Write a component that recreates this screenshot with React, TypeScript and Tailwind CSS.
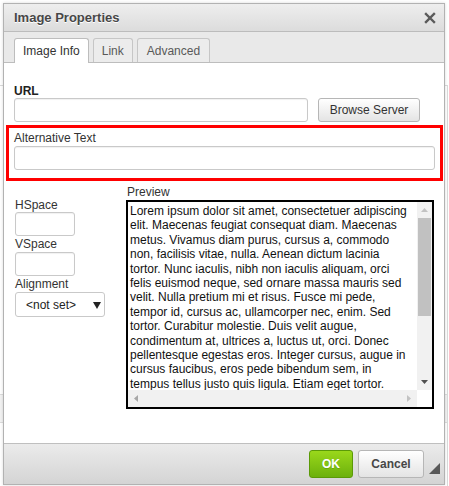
import React from "react";

const previewLines = [
  "Lorem ipsum dolor sit amet, consectetuer adipiscing",
  "elit. Maecenas feugiat consequat diam. Maecenas",
  "metus. Vivamus diam purus, cursus a, commodo",
  "non, facilisis vitae, nulla. Aenean dictum lacinia",
  "tortor. Nunc iaculis, nibh non iaculis aliquam, orci",
  "felis euismod neque, sed ornare massa mauris sed",
  "velit. Nulla pretium mi et risus. Fusce mi pede,",
  "tempor id, cursus ac, ullamcorper nec, enim. Sed",
  "tortor. Curabitur molestie. Duis velit augue,",
  "condimentum at, ultrices a, luctus ut, orci. Donec",
  "pellentesque egestas eros. Integer cursus, augue in",
  "cursus faucibus, eros pede bibendum sem, in",
  "tempus tellus justo quis ligula. Etiam eget tortor.",
  "Vestibulum rutrum, est ut placerat elementum, lectus",
];

const inputCls =
  "block h-[24px] rounded-[3px] border border-[#c9c9c9] bg-white shadow-[inset_0_1px_1px_rgba(0,0,0,0.06)]";

export default function App() {
  return (
    <div className="relative w-[449px] h-[486px] overflow-hidden bg-white font-['Liberation_Sans',Arial,sans-serif] text-[12px] leading-[14px] text-[#333]">
      {/* background page */}
      <div className="h-full pt-[85px]">
        <div className="h-full mr-[1px] border-t border-r border-[#dadada]">
          <div className="mt-[308px] h-[29px] border-y border-[#dcdcdc] bg-[#f2f2f2]" />
        </div>
      </div>

      {/* dialog */}
      <div className="absolute left-[3px] top-[3px] w-[442px] h-[482px] flex flex-col border border-[#b2b2b2] bg-white shadow-[0_0_3px_rgba(0,0,0,0.15)]">
        {/* title */}
        <div className="h-[28px] shrink-0 flex items-center justify-between pl-[10px] pr-[8px] border-b border-[#bcbcbc] bg-gradient-to-b from-[#eeeeee] to-[#dcdcdc]">
          <span className="text-[13px] font-bold text-[#474747] [text-shadow:0_1px_0_#fff]">
            Image Properties
          </span>
          <svg width="12" height="12" viewBox="0 0 12 12" className="mt-[1px]">
            <path d="M2 2 L10 10 M10 2 L2 10" stroke="#5a5a5a" strokeWidth="2.4" strokeLinecap="square" />
          </svg>
        </div>

        {/* tabs */}
        <div className="h-[31px] shrink-0 flex items-end gap-[4px] pl-[10px] border-b border-[#bdbdbd] bg-[#e9e9e9]">
          <div className="h-[25px] mb-[-1px] px-[8px] flex items-center rounded-t-[3px] border border-b-0 border-[#bdbdbd] bg-white text-[#333]">
            Image Info
          </div>
          <div className="h-[24px] px-[8px] flex items-center rounded-t-[3px] border border-b-0 border-[#c6c6c6] bg-[#ececec] text-[#595959]">
            Link
          </div>
          <div className="h-[24px] px-[9px] flex items-center rounded-t-[3px] border border-b-0 border-[#c6c6c6] bg-[#ececec] text-[#595959]">
            Advanced
          </div>
        </div>

        {/* body */}
        <div className="flex-1 flex flex-col">
          <div className="pt-[21px] pl-[10px]">
            <div className="font-bold text-[#222]">URL</div>
            <div className="flex items-center">
              <div className={inputCls + " w-[294px]"} />
              <div className="ml-[10px] w-[102px] h-[24px] flex items-center justify-center rounded-[3px] border border-[#b6b6b6] bg-gradient-to-b from-white to-[#e4e4e4] text-[#333]">
                Browse Server
              </div>
            </div>
          </div>

          <div className="mt-[3px] ml-[2px] w-[437px] h-[56px] border-[3px] border-[#ff0000] pt-[3px] pl-[5px] pb-[8px]">
            <div>Alternative Text</div>
            <div className={inputCls + " mt-[1px] w-[421px]"} />
          </div>

          <div className="flex">
            {/* left column */}
            <div className="pl-[11px] pt-[17px] w-[122px] shrink-0">
              <div>HSpace</div>
              <div className={inputCls + " w-[60px]"} />
              <div className="mt-[1px]">VSpace</div>
              <div className={inputCls + " w-[60px] mt-[1px]"} />
              <div className="mt-[1px]">Alignment</div>
              <div className="relative mt-[1px] w-[90px] h-[25px] flex items-center rounded-[3px] border border-[#c9c9c9] bg-white pl-[10px] text-[#222]">
                {"<not set>"}
                <svg width="8" height="7" viewBox="0 0 8 7" className="absolute left-[77px] top-[9px]">
                  <path d="M0 0 L8 0 L4 7 Z" fill="#222" />
                </svg>
              </div>
            </div>

            {/* preview column */}
            <div className="pt-[4px]">
              <div className="pl-[1px]">Preview</div>
              <div className="mt-[1px] w-[308px] h-[209px] border-2 border-black flex flex-col bg-white">
                <div className="flex flex-1 min-h-0">
                  <div className="flex-1 overflow-hidden pl-[2px] pt-[2px] text-[12px] leading-[14.4px] text-[#111]">
                    {previewLines.map((l, i) => (
                      <div key={i} className="whitespace-nowrap">
                        {l}
                      </div>
                    ))}
                  </div>
                  <div className="w-[15px] shrink-0 flex flex-col bg-[#f1f1f1]">
                    <div className="h-[16px] flex items-center justify-center">
                      <svg width="7" height="4" viewBox="0 0 7 4">
                        <path d="M0 4 L7 4 L3.5 0 Z" fill="#c2c2c2" />
                      </svg>
                    </div>
                    <div className="h-[98px] mx-[1px] bg-[#c1c1c1]" />
                    <div className="flex-1" />
                    <div className="h-[16px] flex items-center justify-center">
                      <svg width="7" height="4" viewBox="0 0 7 4">
                        <path d="M0 0 L7 0 L3.5 4 Z" fill="#505050" />
                      </svg>
                    </div>
                  </div>
                </div>
                <div className="h-[17px] shrink-0 flex">
                  <div className="flex-1 flex items-center justify-between bg-[#f1f1f1] px-[6px]">
                    <svg width="4" height="7" viewBox="0 0 4 7">
                      <path d="M4 0 L4 7 L0 3.5 Z" fill="#a8a8a8" />
                    </svg>
                    <svg width="4" height="7" viewBox="0 0 4 7">
                      <path d="M0 0 L0 7 L4 3.5 Z" fill="#c2c2c2" />
                    </svg>
                  </div>
                  <div className="w-[15px] bg-white" />
                </div>
              </div>
            </div>
          </div>
        </div>

        {/* footer */}
        <div className="relative h-[41px] shrink-0 flex justify-end gap-[5px] pt-[6px] pr-[20px] border-t border-[#bfbfbf] bg-gradient-to-b from-[#ebebeb] to-[#d4d4d4]">
          <div className="w-[44px] h-[28px] flex items-center justify-center rounded-[3px] border border-[#5b9a07] bg-gradient-to-b from-[#9ad81b] to-[#6cb10c] font-bold text-white [text-shadow:0_1px_0_rgba(0,0,0,0.15)]">
            OK
          </div>
          <div className="w-[66px] h-[28px] flex items-center justify-center rounded-[3px] border border-[#b6b6b6] bg-gradient-to-b from-white to-[#e4e4e4] font-bold text-[#474747]">
            Cancel
          </div>
          <svg width="11" height="11" viewBox="0 0 11 11" className="absolute right-[4px] bottom-[10px]">
            <path d="M11 0 L11 11 L0 11 Z" fill="#595959" />
          </svg>
        </div>
      </div>
    </div>
  );
}
